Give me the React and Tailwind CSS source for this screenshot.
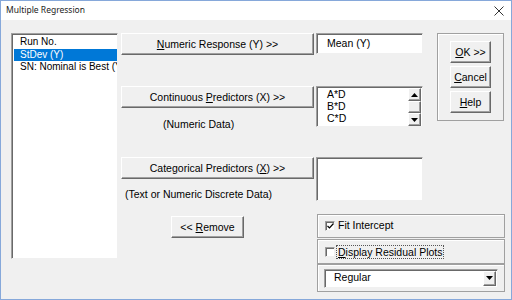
import React from 'react';

const raised =
  'bg-[#f0f0f0] border border-t-white border-l-white border-r-[#696969] border-b-[#696969] shadow-[inset_-1px_-1px_#a0a0a0]';
const sunken =
  'bg-white border border-t-[#a0a0a0] border-l-[#a0a0a0] border-r-[#f0f0f0] border-b-[#f0f0f0] shadow-[inset_1px_1px_#696969]';
const frame = 'border border-[#a0a0a0] shadow-[inset_1px_1px_#ffffff]';

const Btn = ({ children, className }) => (
  <div className={`${raised} flex items-center justify-center leading-none ${className}`}>
    <span>{children}</span>
  </div>
);

const Arrow = ({ down }) => (
  <svg width="7" height="4" viewBox="0 0 7 4">
    <path d={down ? 'M0 0h7L3.5 4z' : 'M0 4h7L3.5 0z'} fill="#000" />
  </svg>
);

const ScrollBtn = ({ down, className }) => (
  <div className={`${raised} w-[13px] h-[13px] flex items-center justify-center ${className}`}>
    <Arrow down={down} />
  </div>
);

export default function App() {
  const columns = ['Run No.', 'StDev (Y)', 'SN: Nominal is Best (Y)'];
  const predictors = ['A*D', 'B*D', 'C*D'];

  return (
    <div className="w-[512px] h-[300px] border border-[#86a8da] flex flex-col font-['Liberation_Sans',Arial,sans-serif] text-[10.5px] text-black overflow-hidden">
      {/* Barre de titre */}
      <div className="h-[19px] bg-white flex items-center justify-between pl-[5px] pr-[7px]">
        <span className="font-['Noto_Sans',sans-serif] text-[8.5px] text-[#222]">Multiple Regression</span>
        <svg width="10" height="10" viewBox="0 0 10 10">
          <path d="M0.5 0.5l9 9M9.5 0.5l-9 9" stroke="#333" strokeWidth="1" />
        </svg>
      </div>

      <div className="flex-1 bg-[#f0f0f0] flex items-start pl-[10px] pt-[13px]">
        {/* Liste des colonnes */}
        <div className={`${sunken} w-[107px] h-[226px] pt-[2px] pl-[2px] overflow-hidden text-[10px]`}>
          {columns.map((c, i) => (
            <div
              key={c}
              className={`h-[12.5px] leading-[12.5px] pl-[6px] whitespace-nowrap ${
                i === 1 ? 'bg-[#0078d7] text-white' : ''
              }`}
            >
              {c}
            </div>
          ))}
        </div>

        <div className="ml-[3px] flex flex-col">
          <div className="flex items-start">
            {/* Boutons */}
            <div className="w-[193px] flex flex-col">
              <Btn className="h-[22px]">
                <u>N</u>umeric Response (Y) &gt;&gt;
              </Btn>
              <Btn className="h-[22px] mt-[31px]">
                Continuous <u>P</u>redictors (X) &gt;&gt;
              </Btn>
              <div className="h-[14px] leading-[14px] mt-[9px] pl-[42px]">(Numeric Data)</div>
              <Btn className="h-[22px] mt-[26px]">
                Categorical Predictors (<u>X</u>) &gt;&gt;
              </Btn>
              <div className="h-[14px] leading-[14px] mt-[8px] pl-[4px]">(Text or Numeric Discrete Data)</div>
            </div>

            {/* Champs */}
            <div className="ml-[2px] w-[107px] flex flex-col">
              <div className={`${sunken} h-[21px] pl-[10px] pt-[4px] leading-none`}>Mean (Y)</div>
              <div className={`${sunken} h-[41px] mt-[32px] flex`}>
                <div className="flex-1 pl-[10px] pt-[1px]">
                  {predictors.map((p) => (
                    <div key={p} className="h-[12px] leading-[12px]">
                      {p}
                    </div>
                  ))}
                </div>
                <div className="w-[13px] mr-[1px] mt-[1px] flex flex-col">
                  <ScrollBtn />
                  <div className={`${raised} h-[12px]`} />
                  <ScrollBtn down />
                </div>
              </div>
              <div className={`${sunken} h-[44px] mt-[30px]`} />
            </div>

            {/* OK / Cancel / Help */}
            <div className={`${frame} ml-[14px] w-[67px] h-[88px] flex flex-col items-center pt-[7px] gap-[3px]`}>
              <Btn className="w-[41px] h-[22px] border-[#000] border-t-[#000] border-l-[#000]">
                <u>O</u>K &gt;&gt;
              </Btn>
              <Btn className="w-[41px] h-[22px]">
                <u>C</u>ancel
              </Btn>
              <Btn className="w-[41px] h-[22px]">
                <u>H</u>elp
              </Btn>
            </div>
          </div>

          <div className="flex items-start mt-[13px]">
            <div className="w-[193px] pl-[50px] pt-[2px]">
              <Btn className="w-[73px] h-[22px]">
                &lt;&lt; <u>R</u>emove
              </Btn>
            </div>

            {/* Options */}
            <div className="ml-[3px] w-[188px] flex flex-col">
              <div className={`${frame} h-[24px] flex items-center pl-[7px]`}>
                <div className={`${sunken} w-[10px] h-[10px] flex items-center justify-center`}>
                  <svg width="7" height="6" viewBox="0 0 7 6">
                    <path d="M0.5 3l2 2 4-4.5" stroke="#000" strokeWidth="1.2" fill="none" />
                  </svg>
                </div>
                <span className="ml-[3px]">Fit Intercept</span>
              </div>
              <div className={`${frame} h-[25px] mt-[1px] flex items-center pl-[7px]`}>
                <div className={`${sunken} w-[10px] h-[10px]`} />
                <span className="ml-[2px] px-[1px] outline outline-1 outline-dotted outline-[#555] leading-[12px]">
                  <u>D</u>isplay Residual Plots
                </span>
              </div>
              <div className={`${frame} h-[28px] flex items-center px-[6px]`}>
                <div className={`${sunken} flex-1 h-[19px] flex items-center justify-between pl-[9px] pr-[1px]`}>
                  <span>Regular</span>
                  <ScrollBtn down className="h-[15px]" />
                </div>
              </div>
            </div>
          </div>
        </div>
      </div>
    </div>
  );
}
